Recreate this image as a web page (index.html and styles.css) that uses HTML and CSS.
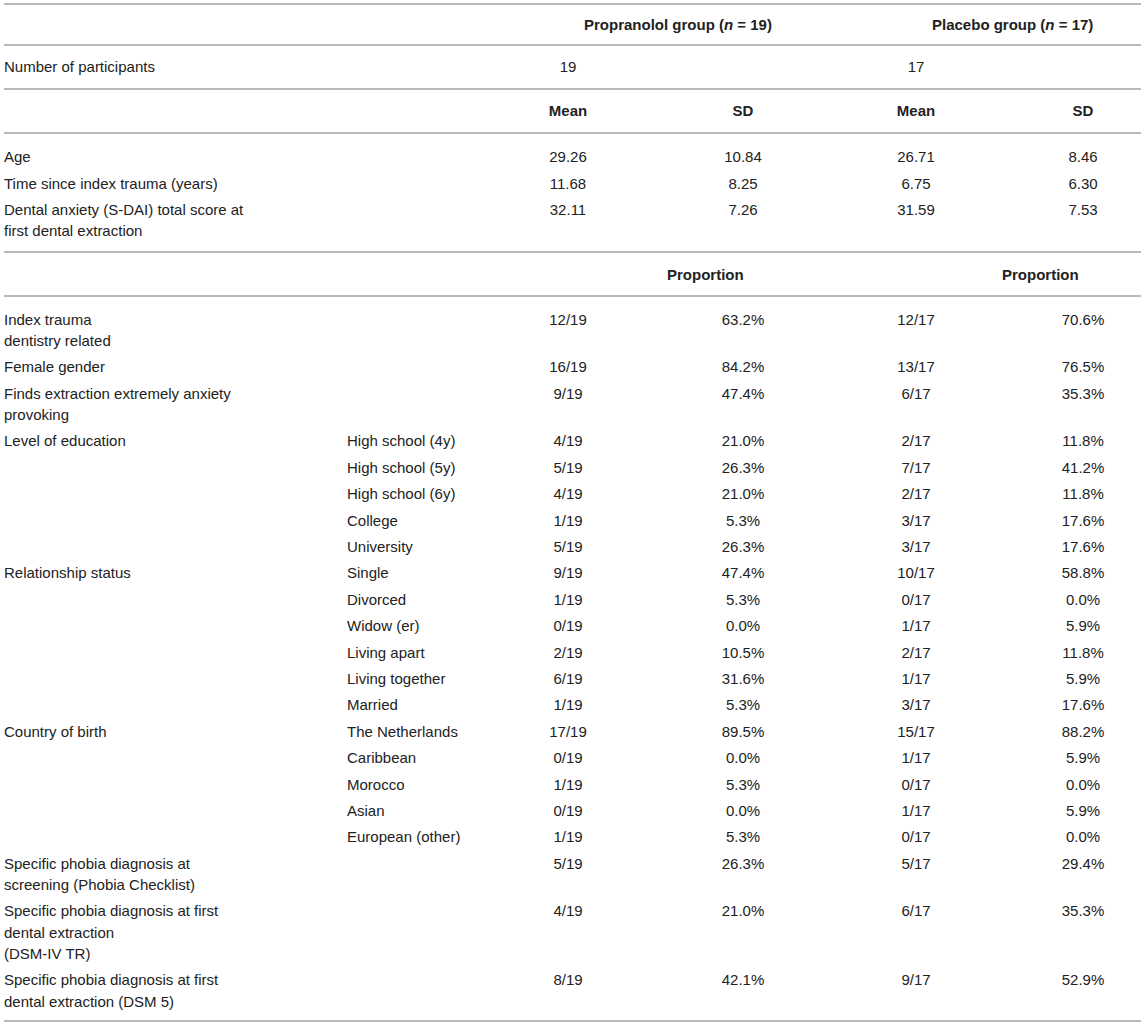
FILE: index.html
```html
<!DOCTYPE html>
<html lang="en">
<head>
<meta charset="utf-8">
<title>Participant characteristics</title>
<link rel="stylesheet" href="styles.css">
</head>
<body>
<div class="wrap">
<table class="t">
  <colgroup>
    <col class="c1"><col class="c2"><col class="c3"><col class="c4"><col class="c5"><col class="c6">
  </colgroup>
  <thead>
    <tr class="hrow">
      <th colspan="2"></th>
      <th colspan="2" class="grp grp-a">Propranolol group (<i>n</i> = 19)</th>
      <th colspan="2" class="grp grp-b">Placebo group (<i>n</i> = 17)</th>
    </tr>
  </thead>
  <tbody>
    <tr class="hrow">
      <td class="lab">Number of participants</td><td></td>
      <td class="num">19</td><td></td><td class="num">17</td><td></td>
    </tr>
    <tr class="hrow">
      <td></td><td></td>
      <th class="num">Mean</th><th class="num">SD</th><th class="num">Mean</th><th class="num c6p">SD</th>
    </tr>
  </tbody>
  <tbody class="grp-body">
    <tr class="first">
      <td class="lab">Age</td><td></td>
      <td class="num">29.26</td><td class="num">10.84</td><td class="num">26.71</td><td class="num c6p">8.46</td>
    </tr>
    <tr>
      <td class="lab">Time since index trauma (years)</td><td></td>
      <td class="num">11.68</td><td class="num">8.25</td><td class="num">6.75</td><td class="num c6p">6.30</td>
    </tr>
    <tr class="last">
      <td class="lab">Dental anxiety (S-DAI) total score at<br>first dental extraction</td><td></td>
      <td class="num">32.11</td><td class="num">7.26</td><td class="num">31.59</td><td class="num c6p">7.53</td>
    </tr>
  </tbody>
  <tbody>
    <tr class="hrow">
      <td></td><td></td><td></td>
      <th class="prop prop-a">Proportion</th>
      <td></td>
      <th class="prop prop-b">Proportion</th>
    </tr>
  </tbody>
  <tbody class="grp-body">
    <tr class="first">
      <td class="lab">Index trauma<br>dentistry related</td><td></td>
      <td class="num">12/19</td><td class="num">63.2%</td><td class="num">12/17</td><td class="num c6p">70.6%</td>
    </tr>
    <tr>
      <td class="lab">Female gender</td><td></td>
      <td class="num">16/19</td><td class="num">84.2%</td><td class="num">13/17</td><td class="num c6p">76.5%</td>
    </tr>
    <tr>
      <td class="lab">Finds extraction extremely anxiety<br>provoking</td><td></td>
      <td class="num">9/19</td><td class="num">47.4%</td><td class="num">6/17</td><td class="num c6p">35.3%</td>
    </tr>
    <tr>
      <td class="lab">Level of education</td><td class="sub">High school (4y)</td>
      <td class="num">4/19</td><td class="num">21.0%</td><td class="num">2/17</td><td class="num c6p">11.8%</td>
    </tr>
    <tr>
      <td class="lab"></td><td class="sub">High school (5y)</td>
      <td class="num">5/19</td><td class="num">26.3%</td><td class="num">7/17</td><td class="num c6p">41.2%</td>
    </tr>
    <tr>
      <td class="lab"></td><td class="sub">High school (6y)</td>
      <td class="num">4/19</td><td class="num">21.0%</td><td class="num">2/17</td><td class="num c6p">11.8%</td>
    </tr>
    <tr>
      <td class="lab"></td><td class="sub">College</td>
      <td class="num">1/19</td><td class="num">5.3%</td><td class="num">3/17</td><td class="num c6p">17.6%</td>
    </tr>
    <tr>
      <td class="lab"></td><td class="sub">University</td>
      <td class="num">5/19</td><td class="num">26.3%</td><td class="num">3/17</td><td class="num c6p">17.6%</td>
    </tr>
    <tr>
      <td class="lab">Relationship status</td><td class="sub">Single</td>
      <td class="num">9/19</td><td class="num">47.4%</td><td class="num">10/17</td><td class="num c6p">58.8%</td>
    </tr>
    <tr>
      <td class="lab"></td><td class="sub">Divorced</td>
      <td class="num">1/19</td><td class="num">5.3%</td><td class="num">0/17</td><td class="num c6p">0.0%</td>
    </tr>
    <tr>
      <td class="lab"></td><td class="sub">Widow (er)</td>
      <td class="num">0/19</td><td class="num">0.0%</td><td class="num">1/17</td><td class="num c6p">5.9%</td>
    </tr>
    <tr>
      <td class="lab"></td><td class="sub">Living apart</td>
      <td class="num">2/19</td><td class="num">10.5%</td><td class="num">2/17</td><td class="num c6p">11.8%</td>
    </tr>
    <tr>
      <td class="lab"></td><td class="sub">Living together</td>
      <td class="num">6/19</td><td class="num">31.6%</td><td class="num">1/17</td><td class="num c6p">5.9%</td>
    </tr>
    <tr>
      <td class="lab"></td><td class="sub">Married</td>
      <td class="num">1/19</td><td class="num">5.3%</td><td class="num">3/17</td><td class="num c6p">17.6%</td>
    </tr>
    <tr>
      <td class="lab">Country of birth</td><td class="sub">The Netherlands</td>
      <td class="num">17/19</td><td class="num">89.5%</td><td class="num">15/17</td><td class="num c6p">88.2%</td>
    </tr>
    <tr>
      <td class="lab"></td><td class="sub">Caribbean</td>
      <td class="num">0/19</td><td class="num">0.0%</td><td class="num">1/17</td><td class="num c6p">5.9%</td>
    </tr>
    <tr>
      <td class="lab"></td><td class="sub">Morocco</td>
      <td class="num">1/19</td><td class="num">5.3%</td><td class="num">0/17</td><td class="num c6p">0.0%</td>
    </tr>
    <tr>
      <td class="lab"></td><td class="sub">Asian</td>
      <td class="num">0/19</td><td class="num">0.0%</td><td class="num">1/17</td><td class="num c6p">5.9%</td>
    </tr>
    <tr>
      <td class="lab"></td><td class="sub">European (other)</td>
      <td class="num">1/19</td><td class="num">5.3%</td><td class="num">0/17</td><td class="num c6p">0.0%</td>
    </tr>
    <tr>
      <td class="lab">Specific phobia diagnosis at<br>screening (Phobia Checklist)</td><td></td>
      <td class="num">5/19</td><td class="num">26.3%</td><td class="num">5/17</td><td class="num c6p">29.4%</td>
    </tr>
    <tr>
      <td class="lab">Specific phobia diagnosis at first<br>dental extraction<br>(DSM-IV TR)</td><td></td>
      <td class="num">4/19</td><td class="num">21.0%</td><td class="num">6/17</td><td class="num c6p">35.3%</td>
    </tr>
    <tr class="last">
      <td class="lab">Specific phobia diagnosis at first<br>dental extraction (DSM 5)</td><td></td>
      <td class="num">8/19</td><td class="num">42.1%</td><td class="num">9/17</td><td class="num c6p">52.9%</td>
    </tr>
  </tbody>
</table>
</div>
</body>
</html>
```

FILE: styles.css
```css
html, body {
  margin: 0;
  padding: 0;
  background: #ffffff;
}

.wrap {
  padding: 3px 4px 0 4px;
}

.t {
  width: 1137px;
  table-layout: fixed;
  border-collapse: separate;
  border-spacing: 0;
  border-top: 2px solid #b9b9b9;
  font-family: "Liberation Sans", Arial, Helvetica, sans-serif;
  font-size: 15px;
  line-height: 21.3px;
  color: #222222;
}

.c1 { width: 339px; }
.c2 { width: 147px; }
.c3 { width: 156px; }
.c4 { width: 194px; }
.c5 { width: 152px; }
.c6 { width: 149px; }

.t th,
.t td {
  padding: 2.55px 0;
  vertical-align: top;
  text-align: left;
  white-space: nowrap;
  font-weight: normal;
}

.t th {
  font-weight: bold;
}

.t .hrow > th,
.t .hrow > td {
  border-bottom: 2px solid #b9b9b9;
  vertical-align: middle;
  padding-top: 0;
  padding-bottom: 0;
}

.t thead .hrow > th {
  height: 39px;
}

.t tbody .hrow > th,
.t tbody .hrow > td {
  height: 42px;
}

.grp-body .first > td {
  padding-top: 12.35px;
}

.grp-body .last > td {
  padding-bottom: 9.6px;
  border-bottom: 2px solid #b9b9b9;
}

.grp-body:last-child .first > td {
  padding-top: 11.35px;
}

.grp-body:last-child .last > td {
  padding-bottom: 8.35px;
}

.t .sub {
  padding-left: 4px;
}

.t .num {
  text-align: center;
}

.t .c6p {
  padding-left: 33px;
}

.t .grp-a {
  padding-left: 94px;
}

.t .grp-b {
  padding-left: 92px;
}

.t .prop-a {
  padding-left: 21px;
}

.t .prop-b {
  padding-left: 10px;
}
```
